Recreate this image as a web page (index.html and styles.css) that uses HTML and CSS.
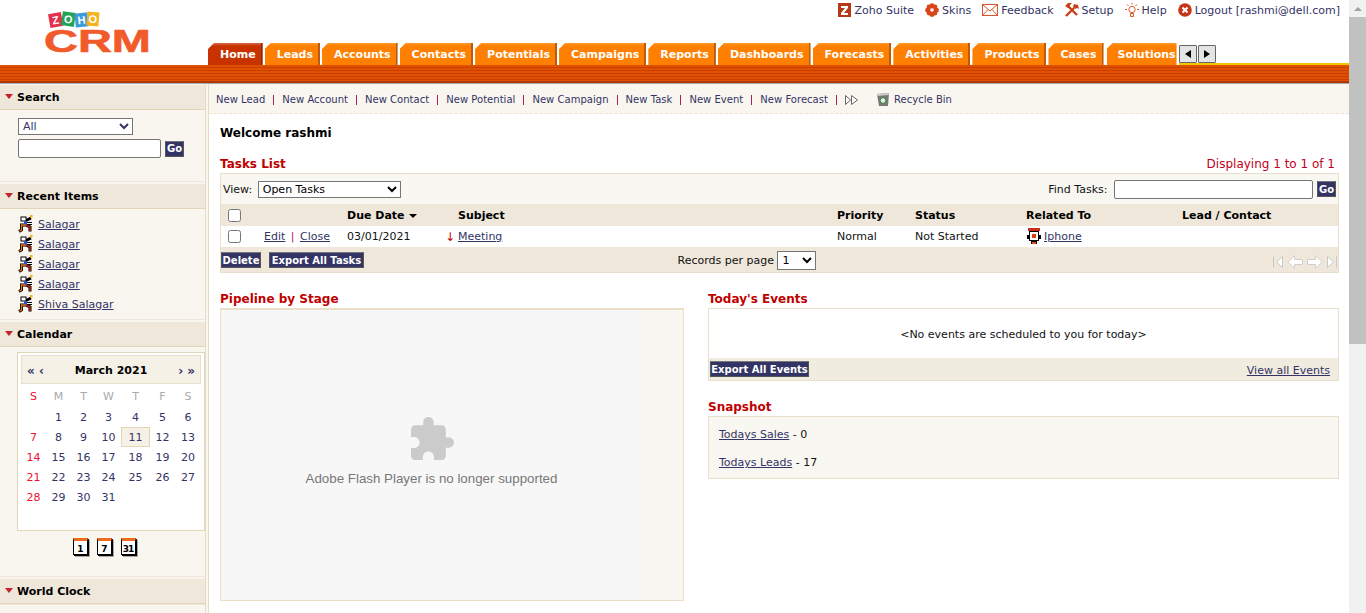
FILE: index.html
```html
<!DOCTYPE html>
<html lang="en">

<head>
    <meta charset="UTF-8">
    <title>Zoho CRM - Home</title>
    <link rel="stylesheet" href="styles.css">
</head>

<body>
    <svg class="defs" width="0" height="0">
        <symbol id="runner" viewBox="0 0 15 18">
            <g fill="none" stroke="#000" stroke-width="3">
                <path d="M7 6l6-3M8 8.500h6M7.500 10H3.500v5l-2.500 1.500M8 10l4 2v4.500"/>
                <rect x="3.500" y="2.500" width="4" height="3" stroke-width="2"/>
            </g>
            <rect x="3.500" y="2.500" width="4" height="3" fill="#fff"/>
            <path d="M6 6h3v4H6z" fill="#2a52d0"/>
            <path d="M9 8h5v1H9z" fill="#fff"/>
            <g fill="none" stroke-width="1.300">
                <path d="M7.500 10H3.500v5l-2 1.200" stroke="#f27a10"/>
                <path d="M8 10l4 2v4" stroke="#e02810"/>
            </g>
            <path d="M12 0h2.500v2.500H12z" fill="#f5b020"/>
        </symbol>
        <symbol id="arrow-first" viewBox="0 0 10 14">
            <path d="M.5 1.500v11M9.500 1.500v11L3.500 7z" fill="#fff" stroke="#c8c8c8"/>
        </symbol>
        <symbol id="arrow-prev" viewBox="0 0 16 14">
            <path d="M.8 7L7.500.8v3.700h8v5h-8v3.700z" fill="#fff" stroke="#d0d0d0"/>
        </symbol>
        <symbol id="arrow-next" viewBox="0 0 16 14">
            <path d="M15.200 7L8.500.8v3.700h-8v5h8v3.700z" fill="#fff" stroke="#d0d0d0"/>
        </symbol>
        <symbol id="arrow-last" viewBox="0 0 10 14">
            <path d="M9.500 1.500v11M.5 1.500v11L6.500 7z" fill="#fff" stroke="#c8c8c8"/>
        </symbol>
    </svg>

    <div class="shell">
        <div class="page">
            <div class="header">
                <div class="logo">
                    <svg width="108" height="50" viewBox="0 0 108 50">
                        <g font-family="Liberation Sans, sans-serif" font-weight="700" font-size="11" fill="#fff" text-anchor="middle">
                            <g transform="rotate(-10 10 10)"><rect x="4" y="4" width="13" height="14" fill="#e4304a"/><text x="10.500" y="15">Z</text></g>
                            <g transform="rotate(8 23 9)"><rect x="17" y="3" width="13" height="14" fill="#23a455"/><text x="23.500" y="14">O</text></g>
                            <g transform="rotate(-6 36 10)"><rect x="30" y="4" width="13" height="14" fill="#3b9bdc"/><text x="36.500" y="15">H</text></g>
                            <g transform="rotate(5 48 9)"><rect x="42" y="3" width="12" height="14" fill="#f5b41e"/><text x="48" y="14">O</text></g>
                        </g>
                        <text x="-1" y="43" font-family="Liberation Sans, sans-serif" font-weight="700" font-size="31" fill="#f15a2b" stroke="#f15a2b" stroke-width=".6" textLength="107" lengthAdjust="spacingAndGlyphs">CRM</text>
                    </svg>
                </div>
                <div class="header-right">
                    <div class="top-links">
                        <a class="top-link" href="#">
                            <svg width="13" height="14" viewBox="0 0 13 14"><rect width="13" height="14" fill="#b5391a"/><path d="M3 3h7v2L6 10h4v2H3v-2l4-5H3z" fill="#fff"/></svg>
                            Zoho Suite
                        </a>
                        <a class="top-link" href="#">
                            <svg width="14" height="14" viewBox="0 0 14 14" fill="#d8461c"><circle cx="7" cy="2.800" r="2.600"/><circle cx="7" cy="11.200" r="2.600"/><circle cx="2.800" cy="7" r="2.600"/><circle cx="11.200" cy="7" r="2.600"/><circle cx="4" cy="4" r="2.400"/><circle cx="10" cy="4" r="2.400"/><circle cx="4" cy="10" r="2.400"/><circle cx="10" cy="10" r="2.400"/></svg>
                            Skins
                        </a>
                        <a class="top-link" href="#">
                            <svg width="16" height="12" viewBox="0 0 16 12" fill="#fff" stroke="#d8562c"><rect x=".5" y=".5" width="15" height="11"/><path d="M.5.500L8 7l7.500-6.500M.5 11.500L6 5.500M15.500 11.500L10 5.500" fill="none"/></svg>
                            Feedback
                        </a>
                        <a class="top-link" href="#">
                            <svg width="14" height="14" viewBox="0 0 14 14"><path d="M1 13l8-8M3 3l9 9" stroke="#c8401a" stroke-width="2.400"/><path d="M0 3l3-3h4L5 2v2L3 5zM9 1l4 1 1 4-2-1-2 1-2-2z" fill="#c8401a"/></svg>
                            Setup
                        </a>
                        <a class="top-link" href="#">
                            <svg width="14" height="15" viewBox="0 0 14 15" fill="none" stroke="#e0582c"><circle cx="7" cy="6.500" r="3.200"/><path d="M7 0v1.500M0 6.500h2M12 6.500h2M2 1.500l1.500 1.500M12 1.500L10.500 3M5.500 10.500h3v3h-3z"/></svg>
                            Help
                        </a>
                        <a class="top-link" href="#">
                            <svg width="14" height="14" viewBox="0 0 14 14"><circle cx="7" cy="7" r="6.800" fill="#c8361a"/><path d="M4.500 4.500l5 5M9.500 4.500l-5 5" stroke="#fff" stroke-width="2"/></svg>
                            Logout [rashmi@dell.com]
                        </a>
                    </div>
                    <div class="tabs">
                        <a class="tab active" href="#">Home</a>
                        <a class="tab" href="#">Leads</a>
                        <a class="tab" href="#">Accounts</a>
                        <a class="tab" href="#">Contacts</a>
                        <a class="tab" href="#">Potentials</a>
                        <a class="tab" href="#">Campaigns</a>
                        <a class="tab" href="#">Reports</a>
                        <a class="tab" href="#">Dashboards</a>
                        <a class="tab" href="#">Forecasts</a>
                        <a class="tab" href="#">Activities</a>
                        <a class="tab" href="#">Products</a>
                        <a class="tab" href="#">Cases</a>
                        <a class="tab last" href="#">Solutions</a>
                        <div class="tab-scroll">
                            <span class="scroll-btn"><i class="tri-left"></i></span>
                            <span class="scroll-btn"><i class="tri-right"></i></span>
                        </div>
                    </div>
                </div>
            </div>
            <div class="band"></div>

            <div class="content">
                <div class="sidebar">
                    <div class="side-section">
                        <h3 class="side-title">Search</h3>
                        <div class="search-body">
                            <select class="search-select"><option>All</option></select>
                            <div class="search-row">
                                <input class="search-input" type="text">
                                <button class="btn btn-go">Go</button>
                            </div>
                        </div>
                    </div>
                    <div class="side-section">
                        <h3 class="side-title">Recent Items</h3>
                        <div class="recent-body">
                            <div class="recent-item"><svg width="15" height="18"><use href="#runner"/></svg><a href="#">Salagar</a></div>
                            <div class="recent-item"><svg width="15" height="18"><use href="#runner"/></svg><a href="#">Salagar</a></div>
                            <div class="recent-item"><svg width="15" height="18"><use href="#runner"/></svg><a href="#">Salagar</a></div>
                            <div class="recent-item"><svg width="15" height="18"><use href="#runner"/></svg><a href="#">Salagar</a></div>
                            <div class="recent-item"><svg width="15" height="18"><use href="#runner"/></svg><a href="#">Shiva Salagar</a></div>
                        </div>
                    </div>
                    <div class="side-section">
                        <h3 class="side-title">Calendar</h3>
                        <div class="calendar-body">
                            <div class="calendar">
                                <div class="cal-head">
                                    <span class="cal-nav">« ‹</span>
                                    <b>March 2021</b>
                                    <span class="cal-nav">› »</span>
                                </div>
                                <div class="cal-grid">
                                    <span class="wd sun">S</span><span class="wd">M</span><span class="wd">T</span><span class="wd">W</span><span class="wd">T</span><span class="wd">F</span><span class="wd">S</span>
                                    <span></span><span>1</span><span>2</span><span>3</span><span>4</span><span>5</span><span>6</span>
                                    <span class="sun">7</span><span>8</span><span>9</span><span>10</span><span class="today">11</span><span>12</span><span>13</span>
                                    <span class="sun">14</span><span>15</span><span>16</span><span>17</span><span>18</span><span>19</span><span>20</span>
                                    <span class="sun">21</span><span>22</span><span>23</span><span>24</span><span>25</span><span>26</span><span>27</span>
                                    <span class="sun">28</span><span>29</span><span>30</span><span>31</span>
                                </div>
                            </div>
                            <div class="cal-views">
                                <span class="cal-view">1</span>
                                <span class="cal-view">7</span>
                                <span class="cal-view">31</span>
                            </div>
                        </div>
                    </div>
                    <div class="side-section">
                        <h3 class="side-title">World Clock</h3>
                    </div>
                </div>

                <div class="main">
                    <div class="subnav">
                        <a href="#">New Lead</a><i></i>
                        <a href="#">New Account</a><i></i>
                        <a href="#">New Contact</a><i></i>
                        <a href="#">New Potential</a><i></i>
                        <a href="#">New Campaign</a><i></i>
                        <a href="#">New Task</a><i></i>
                        <a href="#">New Event</a><i></i>
                        <a href="#">New Forecast</a><i></i>
                        <svg class="more" width="13" height="10" viewBox="0 0 13 10" fill="#fff" stroke="#666"><path d="M.5.500l5 4.500-5 4.500zM6.500.500l6 4.500-6 4.500z"/></svg>
                        <a class="recycle" href="#">
                            <svg width="14" height="15" viewBox="0 0 14 15"><path d="M1 2l12-1-1 13H3z" fill="#777"/><path d="M1 2l12-1-.5 2L1.500 4z" fill="#ccc"/><circle cx="7" cy="8.500" r="2.800" fill="#e8f0e8" stroke="#3a8a3a"/></svg>
                            Recycle Bin
                        </a>
                    </div>

                    <div class="work">
                        <h2 class="welcome">Welcome rashmi</h2>
                        <div class="title-row">
                            <h3 class="box-title">Tasks List</h3>
                            <span class="displaying">Displaying 1 to 1 of 1</span>
                        </div>
                        <div class="task-box">
                            <div class="task-tools">
                                <label class="view-label">View:
                                    <select class="view-select"><option>Open Tasks</option></select>
                                </label>
                                <label class="find-label">Find Tasks:
                                    <input class="find-input" type="text">
                                </label>
                                <button class="btn btn-go">Go</button>
                            </div>
                            <table class="task-table">
                                <colgroup>
                                    <col class="c-check">
                                    <col class="c-actions">
                                    <col class="c-due">
                                    <col class="c-flag">
                                    <col class="c-subject">
                                    <col class="c-priority">
                                    <col class="c-status">
                                    <col class="c-related">
                                    <col>
                                </colgroup>
                                <thead>
                                    <tr>
                                        <th class="check-cell"><input type="checkbox"></th>
                                        <th></th>
                                        <th>Due Date <i class="sort"></i></th>
                                        <th></th>
                                        <th>Subject</th>
                                        <th>Priority</th>
                                        <th>Status</th>
                                        <th>Related To</th>
                                        <th>Lead / Contact</th>
                                    </tr>
                                </thead>
                                <tbody>
                                    <tr>
                                        <td class="check-cell"><input type="checkbox"></td>
                                        <td><a href="#">Edit</a> <span class="pipe">|</span> <a href="#">Close</a></td>
                                        <td>03/01/2021</td>
                                        <td class="flag">↓</td>
                                        <td><a href="#">Meeting</a></td>
                                        <td>Normal</td>
                                        <td>Not Started</td>
                                        <td>
                                            <div class="related">
                                                <svg width="14" height="17" viewBox="0 0 14 17"><path d="M1 0h12v3H1z" fill="#c8301a"/><path d="M2 3h10v10H2z" fill="#000"/><path d="M3 4h8v8H3z" fill="#fff"/><path d="M5 6h4v4H5z" fill="#d8401a"/><path d="M0 7h2v4H0zM12 7h2v4h-2zM4 13h6v3H4z" fill="#000"/><path d="M5 14h4v2H5z" fill="#e0501a"/></svg>
                                                <a href="#">Iphone</a>
                                            </div>
                                        </td>
                                        <td></td>
                                    </tr>
                                </tbody>
                            </table>
                            <div class="task-foot">
                                <div class="task-actions">
                                    <button class="btn btn-delete">Delete</button>
                                    <button class="btn btn-export">Export All Tasks</button>
                                </div>
                                <label class="per-page">Records per page
                                    <select class="per-select"><option>1</option></select>
                                </label>
                                <div class="pager">
                                    <svg width="10" height="14"><use href="#arrow-first"/></svg>
                                    <svg width="16" height="14"><use href="#arrow-prev"/></svg>
                                    <svg width="16" height="14"><use href="#arrow-next"/></svg>
                                    <svg width="10" height="14"><use href="#arrow-last"/></svg>
                                </div>
                            </div>
                        </div>

                        <div class="lower">
                            <div>
                                <h3 class="box-title">Pipeline by Stage</h3>
                                <div class="pipeline-box">
                                    <div class="flash">
                                        <svg class="puzzle" width="43" height="43" viewBox="2 1 21 21" fill="#cbcbcb"><path d="M20.500 11H19V7c0-1.100-.9-2-2-2h-4V3.500C13 2.120 11.880 1 10.500 1S8 2.120 8 3.500V5H4c-1.100 0-1.990.9-1.990 2v3.800H3.500c1.490 0 2.700 1.210 2.700 2.700s-1.210 2.700-2.700 2.700H2V20c0 1.100.9 2 2 2h3.800v-1.500c0-1.490 1.210-2.700 2.700-2.700 1.490 0 2.700 1.210 2.700 2.700V22H17c1.100 0 2-.9 2-2v-4h1.500c1.380 0 2.500-1.120 2.500-2.500S21.880 11 20.500 11z"/></svg>
                                        <p>Adobe Flash Player is no longer supported</p>
                                    </div>
                                </div>
                            </div>
                            <div>
                                <h3 class="box-title">Today's Events</h3>
                                <div class="events-box">
                                    <div class="events-empty">&lt;No events are scheduled to you for today&gt;</div>
                                    <div class="events-foot">
                                        <button class="btn btn-events">Export All Events</button>
                                        <a class="view-all" href="#">View all Events</a>
                                    </div>
                                </div>
                                <h3 class="box-title snapshot-title">Snapshot</h3>
                                <div class="snapshot-box">
                                    <p><a href="#">Todays Sales</a> - 0</p>
                                    <p><a href="#">Todays Leads</a> - 17</p>
                                </div>
                            </div>
                        </div>
                    </div>
                </div>
            </div>
        </div>
        <div class="scrollbar">
            <div class="scroll-arrow"><i class="up"></i></div>
            <div class="scroll-thumb"></div>
        </div>
    </div>
</body>

</html>
```

FILE: styles.css
```css
html, body {
    margin: 0;
    height: 613px;
    overflow: hidden;
}

body {
    font-family: "DejaVu Sans", Verdana, sans-serif;
    font-size: 11px;
    color: #111;
    background: #fff;
}

a {
    color: #333366;
}

h2, h3, p {
    margin: 0;
}

.defs {
    display: block;
    position: absolute;
}

.shell {
    display: flex;
    height: 613px;
}

.page {
    width: 1349px;
    flex: none;
    overflow: hidden;
}

/* header */
.header {
    display: flex;
    height: 65px;
}

.logo {
    width: 163px;
    padding: 9px 0 0 45px;
    flex: none;
}

.header-right {
    flex: 1;
    display: flex;
    flex-direction: column;
    min-width: 0;
}

.top-links {
    height: 43px;
    display: flex;
    justify-content: flex-end;
    gap: 11px;
    padding: 3px 9px 0 0;
    box-sizing: border-box;
}

.top-link {
    display: flex;
    align-items: center;
    gap: 3px;
    height: 14px;
    text-decoration: none;
    white-space: nowrap;
}

.tabs {
    height: 22px;
    display: flex;
    gap: 2px;
}

.tab {
    display: flex;
    align-items: center;
    height: 22px;
    padding: 0 5px 0 12px;
    box-sizing: border-box;
    background: linear-gradient(#ff9a2a 0, #ff7f00 3px);
    border-right: 2px solid #b85c10;
    clip-path: polygon(6px 0, 100% 0, 100% 100%, 0 100%, 0 6px);
    color: #fff;
    font-weight: bold;
    font-size: 11px;
    text-decoration: none;
    white-space: nowrap;
}

.tab.active {
    background: linear-gradient(#d86a50 0, #c83200 3px);
    border-right-color: #902800;
}

.tab.last {
    border-right: 0;
    padding: 0 0 0 11px;
    margin-left: 1px;
    width: 70px;
    overflow: hidden;
}

.tab-scroll {
    flex: 1;
    display: flex;
    gap: 1px;
    height: 22px;
    padding-top: 2px;
    box-sizing: border-box;
    border-bottom: 2px solid #f5c400;
}

.scroll-btn {
    width: 16px;
    height: 16px;
    display: flex;
    align-items: center;
    justify-content: center;
    background: #e4e4e4;
    border: 1px solid #666;
    border-radius: 1px;
}

.tri-left, .tri-right {
    border-top: 4px solid transparent;
    border-bottom: 4px solid transparent;
}

.tri-left {
    border-right: 6px solid #000;
}

.tri-right {
    border-left: 6px solid #000;
}

.band {
    height: 18px;
    background: repeating-linear-gradient(#e05000 0, #e05000 2px, #c84000 2px, #c84000 3px);
    box-shadow: inset 0 -2px 0 #b03800;
    border-bottom: 1px solid #a9a9a9;
}

/* sidebar */
.content {
    display: flex;
    height: 529px;
}

.sidebar {
    width: 205px;
    flex: none;
    padding-top: 1px;
    background: #f9f6ef;
    border-right: 1px solid #e5dcc6;
    box-shadow: 2px 0 0 #f9f6ef, 3px 0 0 #e5dcc6;
    margin-right: 3px;
}

.side-section {
    border-bottom: 1px solid #efe8da;
    margin-bottom: 2px;
}

.side-title {
    height: 24px;
    line-height: 26px;
    padding-left: 17px;
    position: relative;
    background: #efe8da;
    border-bottom: 1px solid #e3d6b8;
    font-size: 11px;
    color: #000;
}

.side-title::before {
    content: "";
    position: absolute;
    left: 5px;
    top: 9px;
    border-left: 4px solid transparent;
    border-right: 4px solid transparent;
    border-top: 5px solid #c8202c;
}

.search-body {
    height: 71px;
    padding: 8px 0 0 18px;
    box-sizing: border-box;
}

.search-select {
    display: block;
    width: 115px;
    height: 17px;
    font: 11px "DejaVu Sans", sans-serif;
    color: #333366;
    background: #fff;
    padding: 0;
}

.search-row {
    display: flex;
    align-items: center;
    gap: 4px;
    margin-top: 4px;
}

.search-input {
    width: 143px;
    height: 19px;
    box-sizing: border-box;
    border: 1px solid #767676;
    border-radius: 2px;
    padding: 0;
}

.btn {
    height: 16px;
    padding: 0;
    background: #333366;
    border: 1px solid #555;
    border-top-color: #777;
    color: #fff;
    font: bold 10px "DejaVu Sans", sans-serif;
    line-height: 13px;
    white-space: nowrap;
}

.btn-go { width: 19px; }
.btn-delete { width: 40px; }
.btn-export { width: 95px; }
.btn-events { width: 99px; }

.recent-body {
    height: 110px;
    padding: 5px 0 0 18px;
    box-sizing: border-box;
}

.recent-item {
    display: flex;
    align-items: center;
    gap: 5px;
    height: 20px;
}

.calendar-body {
    height: 229px;
    padding-top: 5px;
    box-sizing: border-box;
}

.calendar {
    margin-left: 17px;
    width: 188px;
    height: 179px;
    box-sizing: border-box;
    border: 1px solid #e3d6b8;
    background: #fff;
    padding: 2px 3px;
}

.cal-head {
    height: 29px;
    box-sizing: border-box;
    display: flex;
    align-items: center;
    justify-content: space-between;
    padding: 2px 5px 0;
    background: #f6f1e6;
    border: 1px solid #e9e0cc;
    color: #000;
}

.cal-nav {
    font-size: 12px;
    font-weight: bold;
    color: #333366;
}

.cal-grid {
    display: grid;
    grid-template-columns: 25px 25px 25px 25px 29px 25px 26px;
    grid-template-rows: 21px;
    grid-auto-rows: 20px;
    margin-top: 2px;
    color: #333366;
}

.cal-grid span {
    display: flex;
    align-items: center;
    justify-content: center;
    box-sizing: border-box;
}

.cal-grid .wd {
    color: #aaa;
}

.cal-grid .sun {
    color: #f01030;
}

.cal-grid .today {
    background: #f6f1e6;
    border: 1px solid #e3d6b8;
}

.cal-views {
    display: flex;
    justify-content: center;
    gap: 9px;
    margin-top: 7px;
    padding-left: 3px;
}

.cal-view {
    width: 13px;
    height: 11px;
    padding-top: 2px;
    display: flex;
    align-items: center;
    justify-content: center;
    background: #fff;
    border: 1px solid #000;
    border-top: 3px solid #f06a20;
    box-shadow: 1px 1px 0 #000, 2px 2px 0 #aaa;
    font-size: 9px;
    font-weight: bold;
    letter-spacing: -1px;
    color: #000;
}

/* main */
.main {
    flex: 1;
    min-width: 0;
}

.subnav {
    height: 30px;
    box-sizing: border-box;
    display: flex;
    align-items: center;
    gap: 8px;
    padding: 2px 0 0 7px;
    background: #f9f6ef;
    border-bottom: 1px dashed #efe4cc;
    font-size: 10px;
    letter-spacing: .03px;
    white-space: nowrap;
}

.subnav a {
    text-decoration: none;
}

.subnav i {
    width: 1px;
    height: 10px;
    background: #b02060;
}

.subnav .more {
    margin-right: 10px;
}

.recycle {
    display: flex;
    align-items: center;
    gap: 4px;
}

.work {
    padding: 0 10px 0 11px;
}

.welcome {
    font-size: 12px;
    color: #000;
    padding-top: 11px;
    height: 25px;
    line-height: 16px;
}

.title-row {
    display: flex;
    justify-content: space-between;
    align-items: center;
    padding: 4px 4px 0 0;
    height: 23px;
    box-sizing: border-box;
}

.box-title {
    font-size: 12px;
    color: #c00000;
    line-height: 16px;
}

.displaying {
    font-size: 12px;
    color: #c00020;
}

.task-box {
    border: 1px solid #e9e0cc;
    background: #f9f7f1;
}

.task-tools {
    height: 30px;
    display: flex;
    align-items: center;
    padding: 0 2px;
}

.view-select {
    width: 143px;
    height: 17px;
    margin-left: 2px;
    font: 11px "DejaVu Sans", sans-serif;
    background: #fff;
    padding: 0;
}

.find-label {
    margin-left: auto;
    margin-right: 4px;
}

.find-input {
    width: 199px;
    height: 19px;
    box-sizing: border-box;
    border: 1px solid #767676;
    border-radius: 2px;
    padding: 0;
    margin-left: 3px;
    vertical-align: middle;
}

.task-table {
    width: 100%;
    table-layout: fixed;
    border-collapse: collapse;
}

.c-check { width: 43px; }
.c-actions { width: 83px; }
.c-due { width: 99px; }
.c-flag { width: 12px; }
.c-subject { width: 379px; }
.c-priority { width: 78px; }
.c-status { width: 111px; }
.c-related { width: 156px; }

.task-table th {
    height: 22px;
    padding: 0;
    text-align: left;
    background: #efe8da;
    color: #000;
}

.task-table td {
    height: 21px;
    padding: 0;
    background: #fff;
    white-space: nowrap;
}

.task-table .check-cell {
    padding-left: 7px;
}

.check-cell input {
    display: block;
    width: 13px;
    height: 13px;
    margin: 0;
}

.sort {
    display: inline-block;
    vertical-align: middle;
    margin-left: 1px;
    border-left: 4px solid transparent;
    border-right: 4px solid transparent;
    border-top: 4px solid #000;
}

.pipe {
    color: #b02060;
    margin: 0 2px;
}

.flag {
    color: #c00000;
    font-size: 12px;
    text-indent: -1px;
}

.related {
    display: flex;
    align-items: center;
    gap: 3px;
    margin-left: 1px;
}

.task-foot {
    height: 25px;
    box-sizing: border-box;
    display: grid;
    grid-template-columns: 1fr auto 1fr;
    align-items: center;
    padding: 1px 1px 0 0;
    background: #efe8da;
}

.task-actions {
    display: flex;
    gap: 8px;
}

.per-page {
    padding-right: 64px;
}

.per-select {
    width: 39px;
    height: 19px;
    font: 11px "DejaVu Sans", sans-serif;
    background: #fff;
    padding: 0;
}

.pager {
    display: flex;
    justify-content: flex-end;
    gap: 4px;
    margin-top: 3px;
}

.lower {
    display: grid;
    grid-template-columns: 464px 631px;
    gap: 24px;
    margin-top: 18px;
}

.pipeline-box {
    height: 293px;
    margin-top: 1px;
    box-sizing: border-box;
    border: 1px solid #ecdfc8;
    border-top-width: 2px;
    background: #f9f7f1;
}

.flash {
    width: 419px;
    height: 100%;
    display: flex;
    flex-direction: column;
    align-items: center;
    padding: 107px 0 0 2px;
    box-sizing: border-box;
    background: #f7f7f7;
}

.puzzle {
    margin-left: 2px;
}

.flash p {
    margin-top: 11px;
    font: 13.33px "Liberation Sans", Arial, sans-serif;
    color: #777;
}

.events-box {
    margin-top: 1px;
    border: 1px solid #e9e0cc;
}

.events-empty {
    height: 49px;
    line-height: 52px;
    text-align: center;
}

.events-foot {
    height: 22px;
    display: flex;
    align-items: center;
    justify-content: space-between;
    padding: 0 8px 0 1px;
    background: #f1ece0;
}

.view-all {
    margin-top: 2px;
}

.snapshot-title {
    margin-top: 18px;
}

.snapshot-box {
    height: 63px;
    margin-top: 1px;
    box-sizing: border-box;
    border: 1px solid #e9e0cc;
    background: #f9f7f1;
    padding: 11px 10px 0;
}

.snapshot-box p {
    line-height: 14px;
    margin-bottom: 14px;
}

/* fake browser scrollbar */
.scrollbar {
    width: 17px;
    flex: none;
    background: #f1f1f1;
}

.scroll-arrow {
    height: 17px;
    display: flex;
    align-items: center;
    justify-content: center;
}

.scroll-arrow .up {
    border-left: 4px solid transparent;
    border-right: 4px solid transparent;
    border-bottom: 4px solid #a0a0a0;
}

.scroll-thumb {
    height: 327px;
    background: #c1c1c1;
}
```
